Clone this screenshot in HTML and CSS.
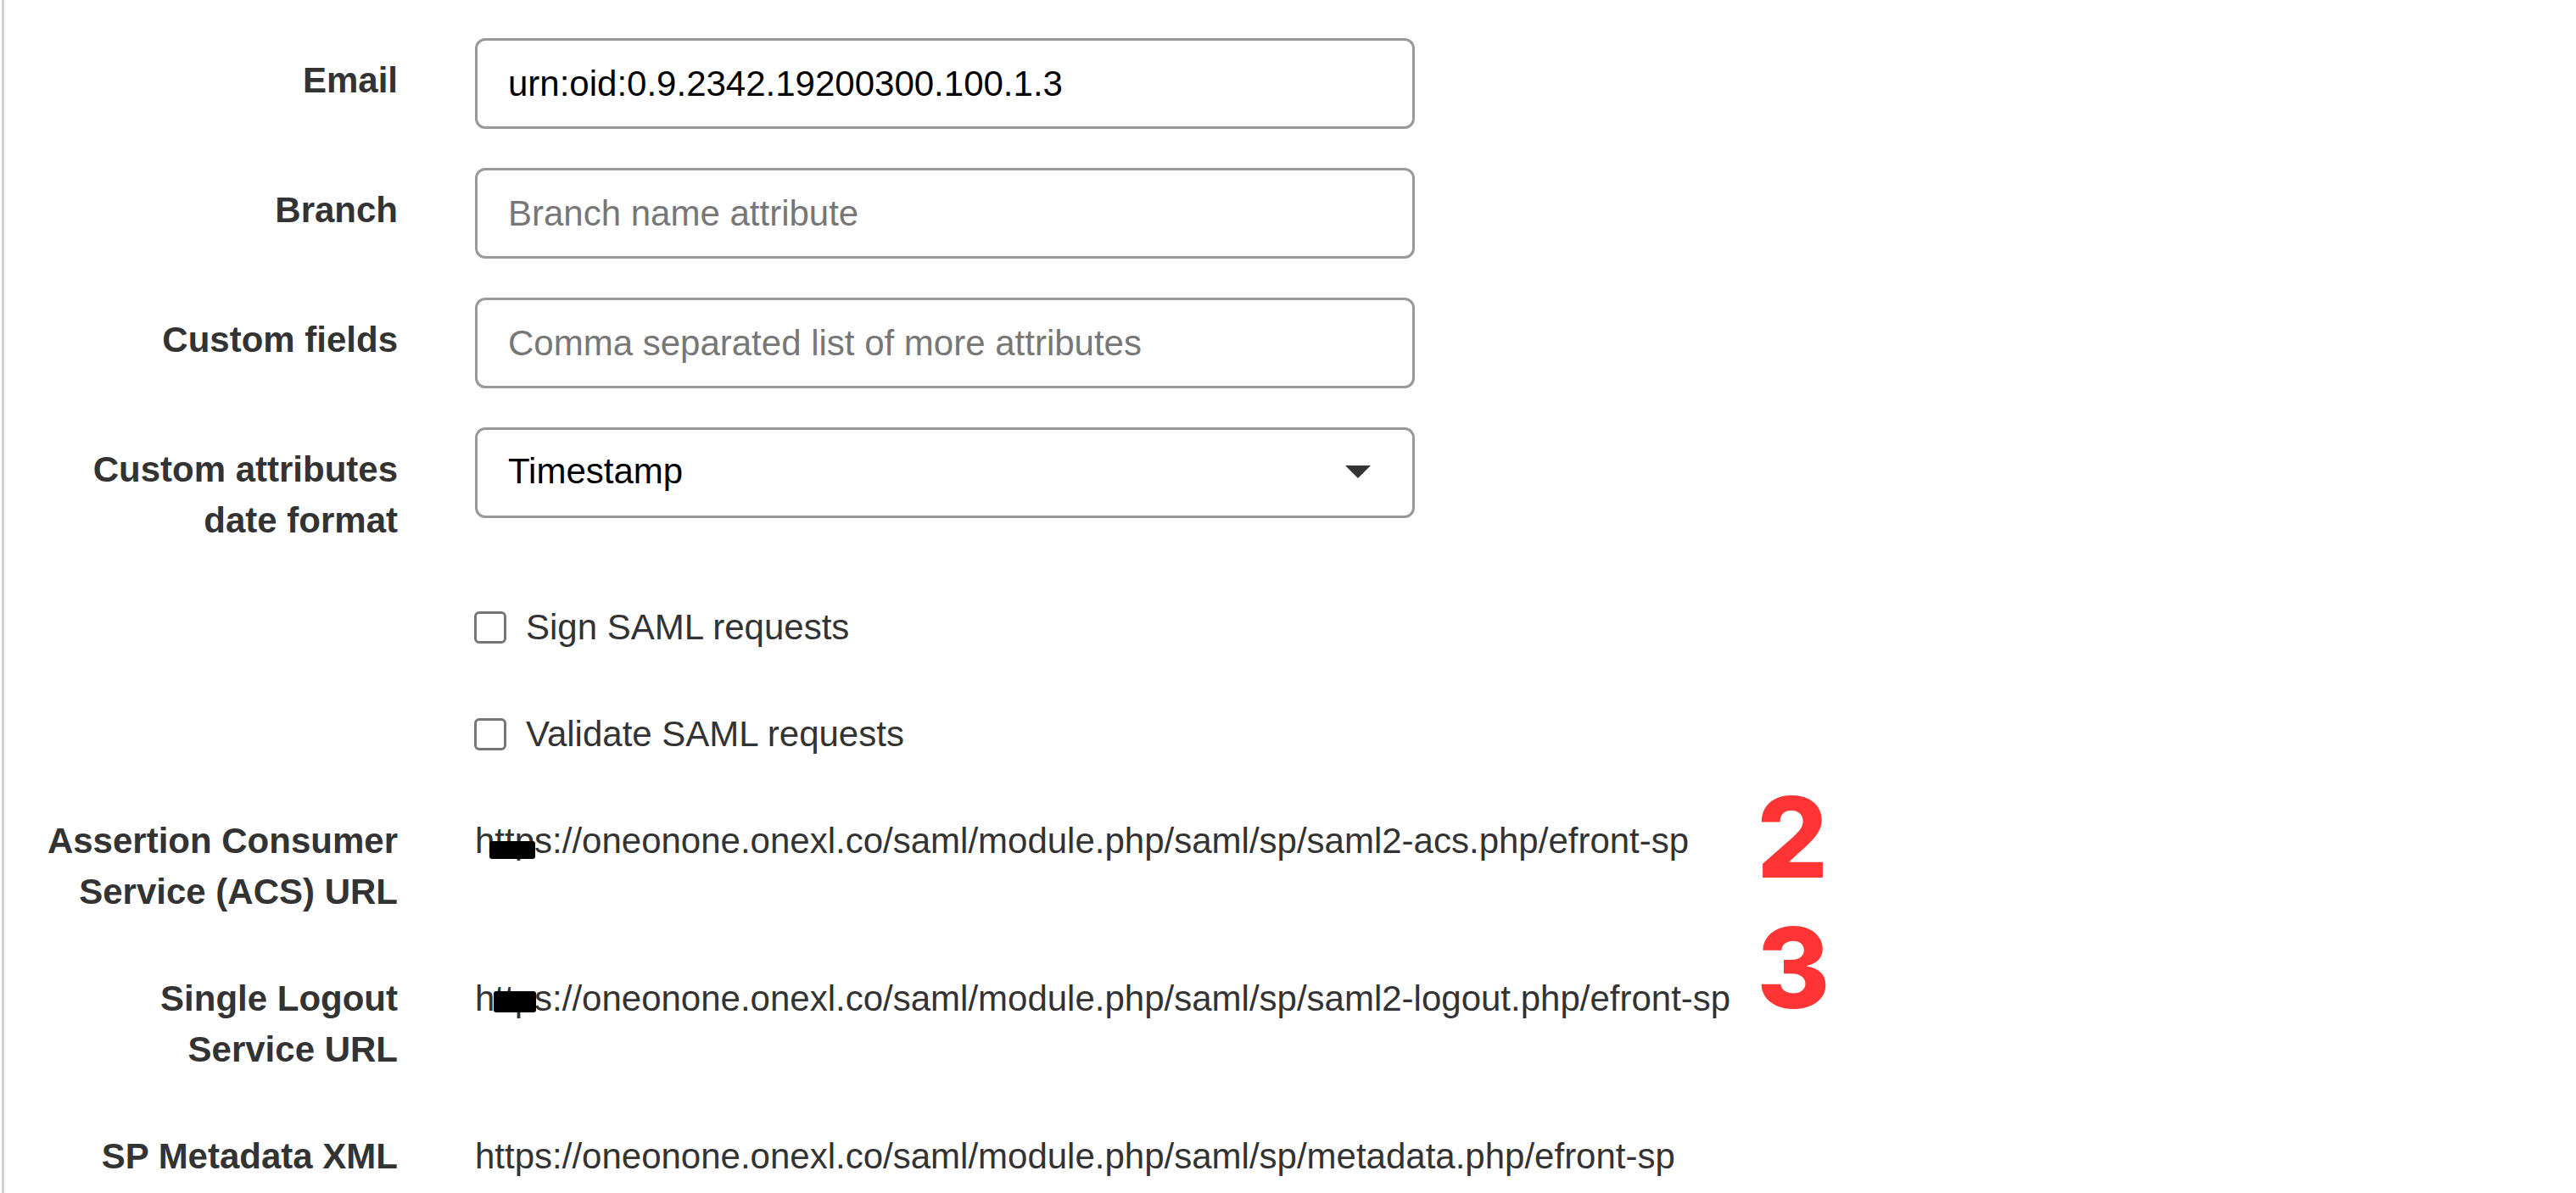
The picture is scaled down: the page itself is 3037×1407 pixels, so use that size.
FILE: index.html
```html
<!DOCTYPE html>
<html lang="en">
<head>
  <meta charset="UTF-8">
  <title>SAML settings</title>
  <link rel="stylesheet" href="styles.css">
</head>
<body>
  <div class="panel">
    <form class="settings">
      <div class="form-group">
        <label class="control-label" for="email">Email</label>
        <input class="form-control" id="email" type="text" value="urn:oid:0.9.2342.19200300.100.1.3">
      </div>

      <div class="form-group">
        <label class="control-label" for="branch">Branch</label>
        <input class="form-control" id="branch" type="text" placeholder="Branch name attribute">
      </div>

      <div class="form-group">
        <label class="control-label" for="custom">Custom fields</label>
        <input class="form-control" id="custom" type="text" placeholder="Comma separated list of more attributes">
      </div>

      <div class="form-group">
        <label class="control-label" for="datefmt">Custom attributes date format</label>
        <div class="select-wrap">
          <select class="form-control" id="datefmt">
            <option>Timestamp</option>
          </select>
        </div>
      </div>

      <div class="form-group">
        <label class="checkbox"><input type="checkbox"> Sign SAML requests</label>
      </div>

      <div class="form-group">
        <label class="checkbox"><input type="checkbox"> Validate SAML requests</label>
      </div>

      <div class="form-group">
        <span class="control-label">Assertion Consumer Service (ACS) URL</span>
        <p class="static">h<span class="redact redact-acs">ttp</span>s://oneonone.onexl.co/saml/module.php/saml/sp/saml2-acs.php/efront-sp</p>
      </div>

      <div class="form-group">
        <span class="control-label">Single Logout Service URL</span>
        <p class="static">h<span class="redact redact-slo">ttp</span>s://oneonone.onexl.co/saml/module.php/saml/sp/saml2-logout.php/efront-sp</p>
      </div>

      <div class="form-group">
        <span class="control-label">SP Metadata XML</span>
        <p class="static">https://oneonone.onexl.co/saml/module.php/saml/sp/metadata.php/efront-sp</p>
      </div>
    </form>
  </div>

  <span class="mark mark-2">2</span>
  <span class="mark mark-3">3</span>
</body>
</html>
```

FILE: styles.css
```css
html, body {
  margin: 0;
  padding: 0;
  background-color: #fff;
}

body {
  position: relative;
  font-family: "Liberation Sans", Arial, sans-serif;
  font-size: 42px;
  line-height: 60px;
  color: #333;
}

.panel {
  margin-left: 2px;
  border-left: 3px solid #d2d2d2;
  padding: 45px 0 0 40px;
  min-height: 100vh;
  box-sizing: border-box;
}

.form-group {
  display: grid;
  grid-template-columns: 424px 1108px;
  column-gap: 91px;
  margin-bottom: 46px;
}

.control-label {
  grid-column: 1;
  text-align: right;
  font-weight: bold;
  padding-top: 20px;
}

.form-control {
  grid-column: 2;
  box-sizing: border-box;
  width: 1108px;
  height: 107px;
  padding: 0 36px;
  border: 3px solid #999;
  border-radius: 12px;
  font-family: inherit;
  font-size: 42px;
  color: #000;
  background-color: #fff;
  outline: none;
}

.form-control::placeholder {
  color: #777;
}

.select-wrap {
  grid-column: 2;
  position: relative;
}

.select-wrap select {
  appearance: none;
  -webkit-appearance: none;
  padding-bottom: 4px;
}

.select-wrap::after {
  content: "";
  position: absolute;
  right: 52px;
  top: 45px;
  border-left: 15px solid transparent;
  border-right: 15px solid transparent;
  border-top: 15px solid #333;
  pointer-events: none;
}

.checkbox {
  grid-column: 2;
  display: flex;
  align-items: center;
  padding-top: 20px;
}

.checkbox input {
  appearance: none;
  -webkit-appearance: none;
  width: 38px;
  height: 38px;
  margin: 0 23px 0 -1px;
  border: 3px solid #767676;
  border-radius: 6px;
  background-color: #fff;
}

.static {
  grid-column: 2;
  margin: 0;
  padding-top: 20px;
  white-space: nowrap;
}

.redact {
  position: relative;
}

.redact::after {
  content: "";
  position: absolute;
  background-color: #000;
  border-radius: 3px;
}

.redact-acs::after {
  left: -6px;
  right: -1px;
  top: 24px;
  height: 21px;
}

.redact-slo::after {
  left: -1px;
  right: -2px;
  top: 15px;
  height: 25px;
}

.mark {
  position: absolute;
  font-family: Inter, "Liberation Sans", sans-serif;
  font-weight: 800;
  font-size: 132px;
  line-height: 1;
  color: #ff3434;
}

.mark-2 {
  left: 2071px;
  top: 921px;
}

.mark-3 {
  left: 2071px;
  top: 1075px;
}
```
